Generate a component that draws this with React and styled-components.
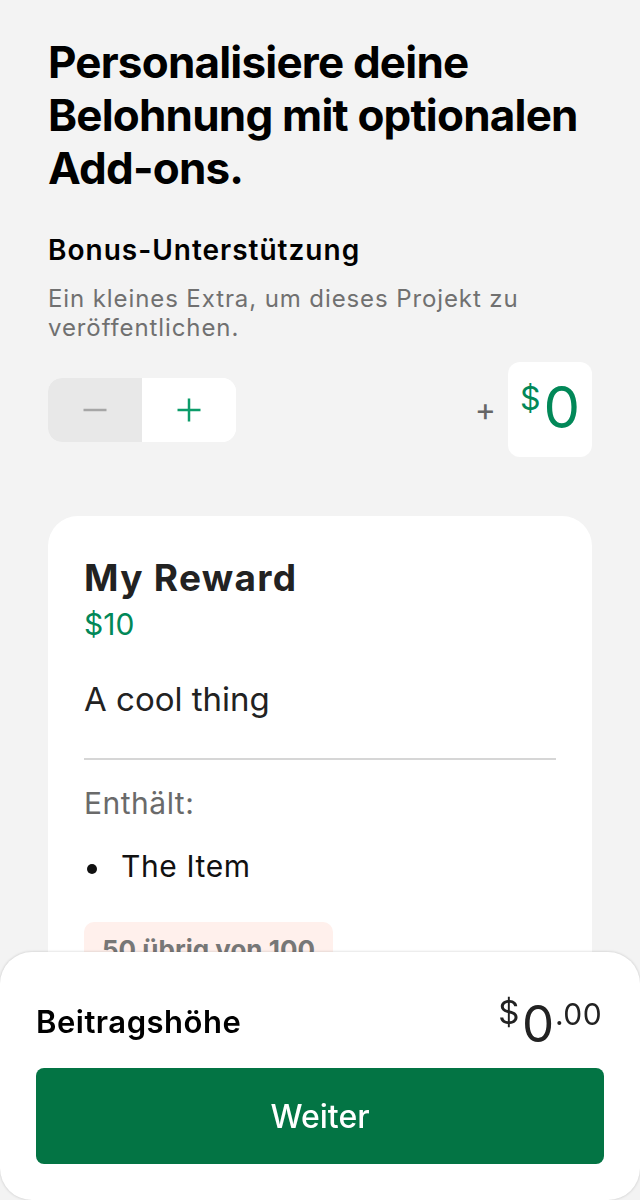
import React from 'react'
import styled, { createGlobalStyle } from 'styled-components'

const GlobalStyle = createGlobalStyle`
  html, body {
    margin: 0;
    padding: 0;
    background: #f3f3f3;
    font-family: Inter, "Noto Sans", sans-serif;
    color: #111;
  }
  * { box-sizing: border-box; }
`

const Page = styled.div`
  padding: 36px 48px 300px;
`

const Title = styled.h1`
  margin: 0;
  font-size: 44px;
  line-height: 53px;
  font-weight: 700;
  color: #000;
  letter-spacing: -0.8px;
`

const SectionTitle = styled.h2`
  margin: 38px 0 0;
  font-size: 28px;
  line-height: 34px;
  font-weight: 600;
  color: #000;
  letter-spacing: 1px;
`

const Description = styled.p`
  margin: 17px 0 0;
  font-size: 24px;
  line-height: 29px;
  color: #707070;
  letter-spacing: 0.9px;
`

const BonusRow = styled.div`
  margin-top: 20px;
  display: flex;
  align-items: center;
  justify-content: space-between;
`

const Stepper = styled.div`
  display: flex;
  width: 188px;
  height: 64px;
  border-radius: 14px;
  overflow: hidden;
  background: #fff;
`

const StepButton = styled.button`
  flex: 1;
  border: none;
  margin: 0;
  padding: 0;
  display: flex;
  align-items: center;
  justify-content: center;
  position: relative;
  background: ${p => (p.$disabled ? '#e8e8e8' : '#fff')};
  color: ${p => (p.$disabled ? '#a6a6a6' : '#0c9c6a')};
  & + &::before {
    content: '';
    position: absolute;
    left: 0;
    top: 14px;
    bottom: 14px;
    width: 1px;
    background: #cfcfcf;
  }
`

const AmountWrap = styled.div`
  display: flex;
  align-items: center;
  gap: 12px;
`

const PlusSign = styled.span`
  font-size: 32px;
  line-height: 1;
  color: #666;
`

const AmountBox = styled.div`
  background: #fff;
  border-radius: 12px;
  width: 84px;
  height: 95px;
  display: flex;
  align-items: center;
  justify-content: center;
  color: #028858;
`

const AmountInner = styled.div`
  display: flex;
  align-items: flex-start;
`

const Currency = styled.span`
  font-size: 32px;
  line-height: 1;
  margin-right: 3px;
`

const Big = styled.span`
  font-size: 58px;
  line-height: 1;
  margin-top: -5px;
`

const Card = styled.div`
  margin-top: 59px;
  background: #fff;
  border-radius: 30px;
  padding: 40px 36px 140px;
`

const RewardName = styled.h3`
  margin: 0;
  font-size: 37px;
  line-height: 44px;
  font-weight: 700;
  color: #222;
  letter-spacing: 1.3px;
`

const RewardPrice = styled.div`
  margin-top: 6px;
  font-size: 30px;
  line-height: 36px;
  color: #028858;
`

const RewardText = styled.p`
  margin: 37px 0 0;
  font-size: 33px;
  line-height: 40px;
  color: #222;
`

const Divider = styled.hr`
  margin: 39px 0 0;
  border: none;
  height: 2px;
  background: #d6d6d6;
`

const Label = styled.div`
  margin-top: 25px;
  font-size: 30px;
  line-height: 36px;
  color: #6a6a6a;
  letter-spacing: 0.5px;
`

const ItemList = styled.ul`
  margin: 27px 0 0;
  padding: 0;
  list-style: none;
`

const Item = styled.li`
  display: flex;
  align-items: flex-start;
  gap: 24px;
  font-size: 30px;
  line-height: 36px;
  color: #111;
  letter-spacing: 0.6px;
`

const Dot = styled.span`
  flex: none;
  width: 10px;
  height: 10px;
  margin: 16px 0 0 3px;
  border-radius: 50%;
  background: #111;
`

const Badge = styled.div`
  display: inline-block;
  margin-top: 38px;
  padding: 12px 18px;
  border-radius: 10px;
  background: #fff0ec;
  color: #777;
  font-size: 26px;
  font-weight: 700;
  line-height: 32px;
`

const Sheet = styled.div`
  position: fixed;
  left: 0;
  right: 0;
  bottom: 0;
  height: 248px;
  background: #fff;
  border-radius: 32px;
  box-shadow: 0 0 3px rgba(0, 0, 0, 0.2);
  padding: 46px 36px 0;
`

const SheetRow = styled.div`
  display: flex;
  align-items: flex-start;
  justify-content: space-between;
`

const SheetLabel = styled.div`
  margin-top: 5px;
  font-size: 31px;
  font-weight: 600;
  line-height: 38px;
  color: #000;
  letter-spacing: 0.5px;
`

const Total = styled.div`
  display: flex;
  align-items: flex-start;
  color: #222;
  margin-right: 2px;
`

const TotalSmall = styled.span`
  font-size: ${p => p.$size || 30}px;
  line-height: 1;
  margin-top: ${p => p.$top || 0}px;
  margin-left: ${p => p.$left || 0}px;
  margin-right: ${p => p.$right || 0}px;
  letter-spacing: 0.4px;
`

const TotalBig = styled.span`
  font-size: 51px;
  line-height: 1;
`

const NextButton = styled.button`
  margin-top: 19px;
  width: 100%;
  height: 96px;
  border: none;
  border-radius: 8px;
  background: #037444;
  color: #fff;
  font-family: inherit;
  font-size: 32px;
  font-weight: 500;
`

const Minus = () => (
  <svg width="24" height="24" viewBox="0 0 24 24">
    <path d="M0.5 12h23" stroke="currentColor" strokeWidth="2.5" />
  </svg>
)

const Plus = () => (
  <svg width="24" height="24" viewBox="0 0 24 24">
    <path d="M0.5 12h23M12 0.5v23" stroke="currentColor" strokeWidth="2.5" />
  </svg>
)

export default function App() {
  return (
    <>
      <GlobalStyle />
      <Page>
        <Title>Personalisiere deine Belohnung mit optionalen Add-ons.</Title>
        <SectionTitle>Bonus-Unterstützung</SectionTitle>
        <Description>Ein kleines Extra, um dieses Projekt zu veröffentlichen.</Description>
        <BonusRow>
          <Stepper>
            <StepButton $disabled aria-label="weniger"><Minus /></StepButton>
            <StepButton aria-label="mehr"><Plus /></StepButton>
          </Stepper>
          <AmountWrap>
            <PlusSign>+</PlusSign>
            <AmountBox>
              <AmountInner>
                <Currency>$</Currency>
                <Big>0</Big>
              </AmountInner>
            </AmountBox>
          </AmountWrap>
        </BonusRow>
        <Card>
          <RewardName>My Reward</RewardName>
          <RewardPrice>$10</RewardPrice>
          <RewardText>A cool thing</RewardText>
          <Divider />
          <Label>Enthält:</Label>
          <ItemList>
            <Item><Dot />The Item</Item>
          </ItemList>
          <Badge>50 übrig von 100</Badge>
        </Card>
      </Page>
      <Sheet>
        <SheetRow>
          <SheetLabel>Beitragshöhe</SheetLabel>
          <Total>
            <TotalSmall $size={33} $top={-2} $right={2}>$</TotalSmall>
            <TotalBig>0</TotalBig>
            <TotalSmall $top={1} $left={1}>.00</TotalSmall>
          </Total>
        </SheetRow>
        <NextButton>Weiter</NextButton>
      </Sheet>
    </>
  )
}
